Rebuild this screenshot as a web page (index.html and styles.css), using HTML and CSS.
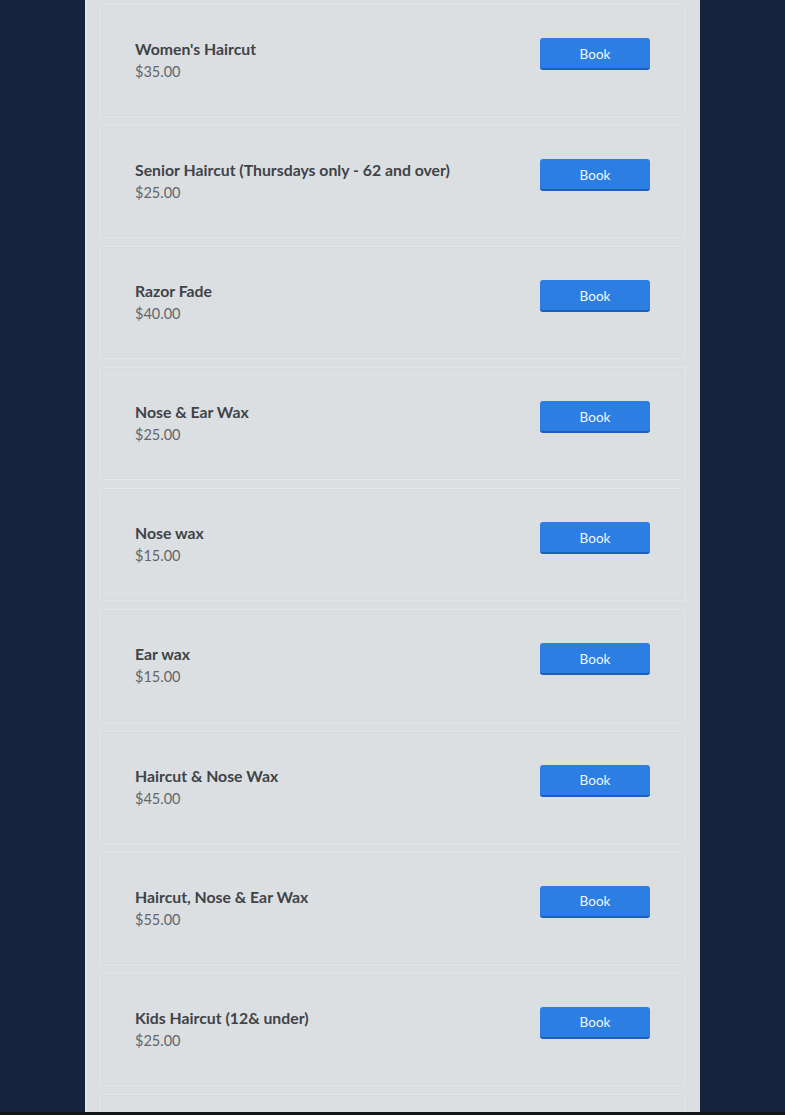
FILE: index.html
```html
<!DOCTYPE html>
<html>
<head>
<meta charset="utf-8">
<link rel="stylesheet" href="styles.css">
</head>
<body>
<div class="viewport">
  <main class="panel">
    <div class="card"><div class="info"><div class="name">Women's Haircut</div><div class="price">$35.00</div></div><button class="book">Book</button></div>
    <div class="card"><div class="info"><div class="name">Senior Haircut (Thursdays only - 62 and over)</div><div class="price">$25.00</div></div><button class="book">Book</button></div>
    <div class="card"><div class="info"><div class="name">Razor Fade</div><div class="price">$40.00</div></div><button class="book">Book</button></div>
    <div class="card"><div class="info"><div class="name">Nose &amp; Ear Wax</div><div class="price">$25.00</div></div><button class="book">Book</button></div>
    <div class="card"><div class="info"><div class="name">Nose wax</div><div class="price">$15.00</div></div><button class="book">Book</button></div>
    <div class="card"><div class="info"><div class="name">Ear wax</div><div class="price">$15.00</div></div><button class="book">Book</button></div>
    <div class="card"><div class="info"><div class="name">Haircut &amp; Nose Wax</div><div class="price">$45.00</div></div><button class="book">Book</button></div>
    <div class="card"><div class="info"><div class="name">Haircut, Nose &amp; Ear Wax</div><div class="price">$55.00</div></div><button class="book">Book</button></div>
    <div class="card"><div class="info"><div class="name">Kids Haircut (12&amp; under)</div><div class="price">$25.00</div></div><button class="book">Book</button></div>
    <div class="card"></div>
  </main>
</div>
<div class="edge"></div>
</body>
</html>
```
FILE: styles.css
```css
html, body {
  margin: 0;
  padding: 0;
}
body {
  background: #16233d;
  font-family: Lato, "Open Sans", "Liberation Sans", sans-serif;
  height: 1115px;
  display: flex;
  flex-direction: column;
  overflow: hidden;
}
.viewport {
  height: 1112px;
  overflow: hidden;
  display: flex;
  justify-content: flex-start;
}
.edge {
  height: 3px;
  background: #121418;
}
.panel {
  margin-left: 85px;
  width: 615px;
  box-sizing: border-box;
  background: #dcdfe2;
  border-left: 2px solid #e2e6ea;
  padding: 4px 15px 0 13px;
  display: flex;
  flex-direction: column;
  gap: 8px;
}
.card {
  flex: none;
  height: 113.1px;
  box-sizing: border-box;
  border: 1px solid #e3e6e8;
  box-shadow: inset 0 0 0 1px #d8dbde;
  background: #dcdfe2;
  display: flex;
  align-items: flex-start;
  justify-content: space-between;
  padding: 33px 34px 0;
}
.info {
  display: flex;
  flex-direction: column;
  gap: 3px;
  margin-top: 1px;
}
.name {
  font-weight: bold;
  font-size: 15.8px;
  color: #404347;
  line-height: 20px;
}
.price {
  font-size: 14.5px;
  color: #63666a;
  line-height: 20px;
}
.book {
  width: 110px;
  height: 32px;
  box-sizing: border-box;
  border: none;
  border-bottom: 2px solid #1c5fb8;
  border-radius: 3px;
  background: #2d7ee3;
  color: #f3f8ff;
  font-family: inherit;
  font-size: 13.5px;
  padding: 1px 0 0;
}
```
